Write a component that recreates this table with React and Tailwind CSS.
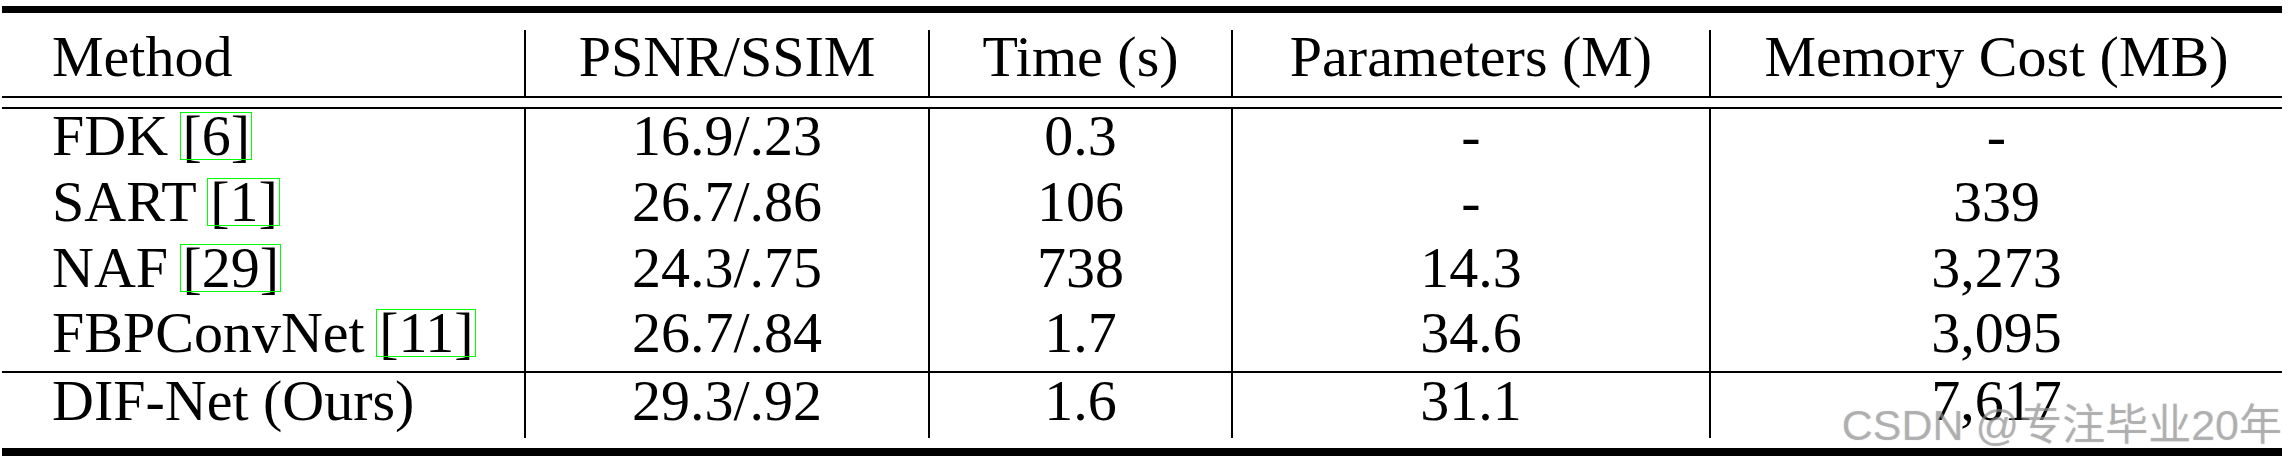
import React from "react";

const COLS = "grid grid-cols-[522px_404px_303px_478px_573px]";

const header = ["Method", "PSNR/SSIM", "Time (s)", "Parameters (M)", "Memory Cost (MB)"];

const rows = [
  { name: "FDK", cite: "6", h: "h-[66px]", cells: ["16.9/.23", "0.3", "-", "-"] },
  { name: "SART", cite: "1", h: "h-[66px]", cells: ["26.7/.86", "106", "-", "339"] },
  { name: "NAF", cite: "29", h: "h-[65px]", cells: ["24.3/.75", "738", "14.3", "3,273"] },
  { name: "FBPConvNet", cite: "11", h: "h-[65px]", cells: ["26.7/.84", "1.7", "34.6", "3,095"] },
];

const ours = { name: "DIF-Net (Ours)", cells: ["29.3/.92", "1.6", "31.1", "7,617"] };

// hyperref style link box round the citation
const Cite = ({ n }) => (
  <span className="relative">
    [{n}]
    <span className="absolute -left-[3px] -right-[2px] top-[9px] bottom-[8px] border border-[#00ff00]" />
  </span>
);

const Row = ({ first, cells, className }) => (
  <div className={COLS}>
    <div className={`pl-[50px] whitespace-nowrap ${className}`}>{first}</div>
    {cells.map((c, i) => (
      <div key={i} className={`border-l-2 border-black text-center whitespace-nowrap ${className}`}>
        {c}
      </div>
    ))}
  </div>
);

export default function App() {
  return (
    <div className="relative w-[2292px] h-[463px] bg-white overflow-hidden">
      <div className="ml-[2px] w-[2280px] font-['Liberation_Serif',serif] text-[58px] text-black">
        <div className="mt-[6px] h-[7px] bg-black" />

        <div className="mt-[17px]">
          <Row first={header[0]} cells={header.slice(1)} className="h-[66px] pt-[6px] leading-[41px]" />
        </div>

        <div className="h-[2px] bg-black" />
        <div className="mt-[9px] h-[2px] bg-black" />

        {rows.map((r) => (
          <Row
            key={r.name}
            first={
              <>
                {r.name} <Cite n={r.cite} />
              </>
            }
            cells={r.cells}
            className={`${r.h} pt-[6px] leading-[41px]`}
          />
        ))}

        <div className="h-[2px] bg-black" />
        <Row first={ours.name} cells={ours.cells} className="h-[65px] pt-[7px] leading-[41px]" />

        <div className="h-[10px]" />
        <div className="h-[8px] bg-black" />
      </div>

      <div className="absolute right-[10px] top-[404px] whitespace-nowrap font-['Liberation_Sans','Noto_Sans_CJK_SC',sans-serif] text-[43px] leading-none text-[rgba(150,150,150,0.45)] [text-shadow:0_0_1px_rgba(120,120,120,0.45)]">
        CSDN @专注毕业20年
      </div>
    </div>
  );
}
